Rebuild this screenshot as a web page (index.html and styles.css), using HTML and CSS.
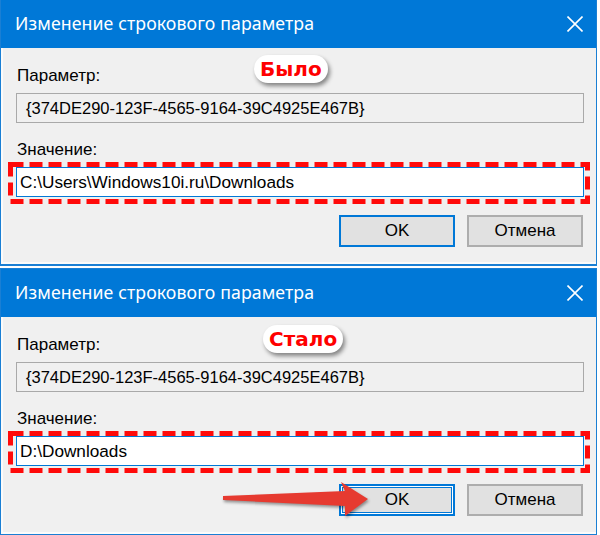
FILE: index.html
```html
<!DOCTYPE html>
<html lang="ru">
<head>
<meta charset="utf-8">
<title>Изменение строкового параметра</title>
<link rel="stylesheet" href="styles.css">
</head>
<body>
<div class="stack">
  <section class="dialog dialog-top">
    <header class="titlebar">
      <span class="title">Изменение строкового параметра</span>
      <svg class="close" width="16" height="16" viewBox="0 0 16 16"><path d="M0.5 0.5 L15.5 15.5 M15.5 0.5 L0.5 15.5" stroke="#fff" stroke-width="1.6" fill="none"/></svg>
    </header>
    <div class="body">
      <div class="label">Параметр:</div>
      <div class="field readonly"><span class="guid">{374DE290-123F-4565-9164-39C4925E467B}</span></div>
      <div class="label label-value">Значение:</div>
      <div class="field-wrap">
        <div class="field edit">C:\Users\Windows10i.ru\Downloads</div>
        <svg class="dash" width="582" height="42" viewBox="0 0 582 42"><rect x="2.5" y="2.5" width="577" height="37" fill="none" stroke="#ff0a0a" stroke-width="5" stroke-dasharray="13 6"/></svg>
      </div>
      <div class="buttons">
        <div class="btn btn-ok">OK</div>
        <div class="btn">Отмена</div>
      </div>
    </div>
    <div class="badge badge-was">Было</div>
  </section>
  <section class="dialog dialog-bottom">
    <header class="titlebar">
      <span class="title">Изменение строкового параметра</span>
      <svg class="close" width="16" height="16" viewBox="0 0 16 16"><path d="M0.5 0.5 L15.5 15.5 M15.5 0.5 L0.5 15.5" stroke="#fff" stroke-width="1.6" fill="none"/></svg>
    </header>
    <div class="body">
      <div class="label">Параметр:</div>
      <div class="field readonly"><span class="guid">{374DE290-123F-4565-9164-39C4925E467B}</span></div>
      <div class="label label-value">Значение:</div>
      <div class="field-wrap">
        <div class="field edit">D:\Downloads</div>
        <svg class="dash" width="582" height="42" viewBox="0 0 582 42"><rect x="2.5" y="2.5" width="577" height="37" fill="none" stroke="#ff0a0a" stroke-width="5" stroke-dasharray="13 6"/></svg>
      </div>
      <div class="buttons">
        <div class="btn btn-ok btn-ok-focus">OK</div>
        <div class="btn">Отмена</div>
      </div>
    </div>
    <div class="badge badge-now">Стало</div>
    <svg class="arrow" width="160" height="44" viewBox="0 0 160 44">
      <polygon points="2,14 124,9 120,0 147,17 124,34 124,24 2,18" fill="#e63a30"/>
    </svg>
  </section>
</div>
</body>
</html>
```
FILE: styles.css
```css
html, body {
  margin: 0;
  padding: 0;
  background: #ffffff;
}
body {
  width: 600px;
  height: 535px;
  overflow: hidden;
  font-family: "Liberation Sans", Arial, sans-serif;
}
.stack {
  display: flex;
  flex-direction: column;
  gap: 2px;
}
.dialog {
  position: relative;
  width: 597px;
  box-sizing: border-box;
  border: 1px solid #1a7fd4;
  background: #f0f0f0;
  display: flex;
  flex-direction: column;
}
.dialog-top {
  height: 266px;
  border-top: 0;
  border-bottom-width: 2px;
}
.dialog-bottom {
  height: 267px;
}
.titlebar {
  height: 48px;
  background: #0078d7;
  display: flex;
  align-items: center;
  justify-content: space-between;
  padding: 0 13px 0 14px;
  flex: none;
}
.title {
  color: #ffffff;
  font-family: "Noto Sans", "Open Sans", sans-serif;
  font-size: 17.7px;
  letter-spacing: 0.1px;
  padding-bottom: 2px;
}
.close {
  display: block;
  margin-bottom: 1px;
}
.body {
  flex: 1;
  padding: 18px 12px 0 15px;
  box-shadow: inset 2px 0 0 #fbfbfb, inset 0 -2px 0 #fbfbfb;
  display: flex;
  flex-direction: column;
  font-size: 17px;
  color: #000;
}
.label {
  line-height: 20px;
  height: 20px;
  padding-left: 1px;
}
.label-value {
  margin-top: 17px;
}
.field {
  height: 30px;
  box-sizing: border-box;
  display: flex;
  align-items: center;
  white-space: nowrap;
  margin-top: 7px;
}
.readonly {
  border: 1px solid #a9a9a9;
  background: #f0f0f0;
  padding-left: 9px;
  font-size: 16.5px;
}
.field-wrap {
  position: relative;
  margin-top: 7px;
}
.field-wrap .field {
  margin-top: 0;
}
.edit {
  border: 1px solid #0078d7;
  background: #ffffff;
  padding-left: 3px;
  font-size: 17.2px;
}
.dash {
  position: absolute;
  left: -8px;
  top: -5px;
  display: block;
}
.buttons {
  display: flex;
  justify-content: flex-end;
  gap: 12px;
  margin-top: 18px;
  padding-right: 1px;
}
.btn {
  width: 116px;
  height: 32px;
  box-sizing: border-box;
  border: 2px solid #adadad;
  background: #e1e1e1;
  display: flex;
  align-items: center;
  justify-content: center;
  font-size: 17px;
}
.btn-ok {
  border-color: #0078d7;
}
.btn-ok-focus {
  box-shadow: inset 0 0 0 1px #ffffff, inset 0 0 0 2px #0078d7;
}
.badge {
  position: absolute;
  height: 28px;
  border-radius: 14px;
  background: #ffffff;
  box-shadow: 2px 3px 4px rgba(0, 0, 0, 0.45);
  color: #ff0000;
  font-family: "DejaVu Sans", sans-serif;
  font-weight: bold;
  font-size: 20px;
  line-height: 28px;
  padding: 0 6px;
}
.badge-was {
  left: 253px;
  top: 55px;
}
.badge-now {
  left: 262px;
  top: 56px;
}
.arrow {
  position: absolute;
  left: 220px;
  top: 213px;
  filter: drop-shadow(1px 2px 1.5px rgba(0, 0, 0, 0.4));
}
```
